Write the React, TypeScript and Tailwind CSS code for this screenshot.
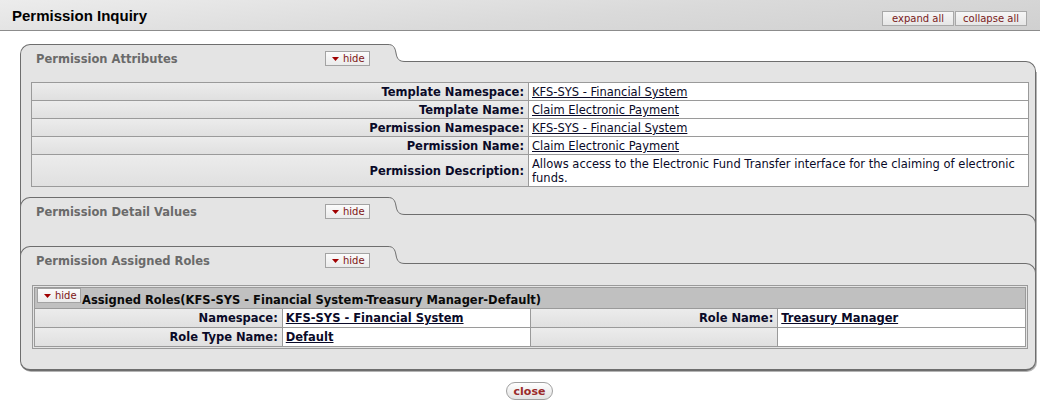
import React from "react";

const FONT = "font-['DejaVu_Sans',Verdana,sans-serif]";

function HideButton({ width = "w-[45px]" }: { width?: string }) {
  return (
    <span
      className={`inline-flex items-center h-[15px] ${width} shrink-0 border border-[#a3a3a3] bg-gradient-to-b from-[#fbfbfb] to-[#ebebeb] text-[10px] text-[#7d1414] leading-none ${FONT}`}
    >
      <svg width="7" height="4" viewBox="0 0 7 4" className="ml-[6px] mr-[4px] block">
        <path d="M0 0H7L3.5 4Z" fill="#a00000" />
      </svg>
      hide
    </span>
  );
}

function SectionHeader({ title, inside = false }: { title: string; inside?: boolean }) {
  return (
    <div className={`flex h-[27px] ${inside ? "-mx-px" : ""}`}>
      <div className="w-[368px] h-full bg-[#e4e4e4] border-t border-l border-[#6e6e6e] rounded-tl-[10px] pt-[6px]">
        <div className="flex items-center h-[15px]">
          <span className="pl-[15px] w-[304px] font-bold text-[11.5px] leading-[14px] text-[#6a6a6a] pt-px">
            {title}
          </span>
          <HideButton />
        </div>
      </div>
      <svg width="17" height="27" className="shrink-0 block">
        <path
          d="M0 0.5 C5 0.5 7 3 8 9 C9 15 11 17.5 17 17.5 L17 27 L0 27 Z"
          fill="#e4e4e4"
        />
        <path
          d="M0 0.5 C5 0.5 7 3 8 9 C9 15 11 17.5 17 17.5"
          fill="none"
          stroke="#6e6e6e"
        />
      </svg>
      <div className="flex-1 flex flex-col">
        <div className="h-[17px]" />
        <div className="h-[10px] bg-[#e4e4e4] border-t border-r border-[#6e6e6e] rounded-tr-[10px]" />
      </div>
    </div>
  );
}

const labelCell =
  "flex items-center justify-end pr-[4px] border-r border-b border-[#9a9a9a] bg-gradient-to-b from-[#ececec] to-[#e0e0e0] font-bold text-[#0a0a28]";
const valueCell =
  "flex items-center pl-[3px] border-r border-b border-[#9a9a9a] bg-white text-[#0a0a28]";

const attrs: [string, string][] = [
  ["Template Namespace:", "KFS-SYS - Financial System"],
  ["Template Name:", "Claim Electronic Payment"],
  ["Permission Namespace:", "KFS-SYS - Financial System"],
  ["Permission Name:", "Claim Electronic Payment"],
];

export default function App() {
  return (
    <div className={`w-[1040px] h-[410px] overflow-hidden bg-white ${FONT} text-[11.5px] leading-[14px]`}>
      {/* Title bar */}
      <div className="h-[31px] border-b border-[#8c8c8c] bg-[linear-gradient(175deg,#ececec_0%,#dadada_55%,#d0d0d0_100%)] flex justify-between pl-[12px] pr-[13px]">
        <h1 className="font-['Liberation_Sans',Arial,sans-serif] font-bold text-[15px] leading-[17px] text-black self-center">
          Permission Inquiry
        </h1>
        <div className="flex gap-[1px] mt-[11px] self-start">
          <span className="h-[15px] w-[72px] flex items-center justify-center border border-[#a8a8a8] bg-gradient-to-b from-[#f6f6f6] to-[#e6e6e6] text-[10px] leading-none text-[#7a1a1a]">
            expand all
          </span>
          <span className="h-[15px] w-[72px] flex items-center justify-center border border-[#a8a8a8] bg-gradient-to-b from-[#f6f6f6] to-[#e6e6e6] text-[10px] leading-none text-[#7a1a1a]">
            collapse all
          </span>
        </div>
      </div>

      {/* Panel */}
      <div className="ml-[20px] w-[1016px] mt-[13px]">
        <SectionHeader title="Permission Attributes" />
        <div className="bg-[#e4e4e4] border-l border-r border-b-2 border-[#6e6e6e] rounded-b-[10px] shadow-[1px_1px_0_#b4b4b4]">
          {/* Section 1 content */}
          <div className="pl-[10px] pr-[6px] pt-[11px] pb-[10px]">
            <div className="grid grid-cols-[497px_1fr] border-t border-l border-[#9a9a9a]">
              {attrs.map(([l, v], i) => (
                <React.Fragment key={i}>
                  <div className={`${labelCell} h-[18px] pt-px`}>{l}</div>
                  <div className={`${valueCell} h-[18px] pt-px`}>
                    <span className="underline">{v}</span>
                  </div>
                </React.Fragment>
              ))}
              <div className={`${labelCell} h-[32px]`}>Permission Description:</div>
              <div className={`${valueCell} h-[32px]`}>
                <span>
                  Allows access to the Electronic Fund Transfer interface for the claiming of electronic
                  <br />
                  funds.
                </span>
              </div>
            </div>
          </div>

          <SectionHeader inside title="Permission Detail Values" />
          <div className="h-[22px]" />

          <SectionHeader inside title="Permission Assigned Roles" />
          <div className="pl-[11px] pr-[7px] pt-[12px] pb-[20px]">
            <div className="border border-[#9a9a9a] p-px">
              <div className="grid grid-cols-4 border-t border-l border-[#9a9a9a]">
                <div className="col-span-4 h-[21px] bg-[#c0c0c0] border-r border-b border-[#9a9a9a] flex items-start pl-[2px]">
                  <HideButton width="w-[44px]" />
                  <span className="ml-[1px] pt-[5px] font-bold text-[#0a0a0a]">
                    Assigned Roles(KFS-SYS - Financial System-Treasury Manager-Default)
                  </span>
                </div>
                <div className={`${labelCell} h-[19px]`}>Namespace:</div>
                <div className={`${valueCell} h-[19px] font-bold`}>
                  <span className="underline">KFS-SYS - Financial System</span>
                </div>
                <div className={`${labelCell} h-[19px]`}>Role Name:</div>
                <div className={`${valueCell} h-[19px] font-bold`}>
                  <span className="underline">Treasury Manager</span>
                </div>
                <div className={`${labelCell} h-[19px]`}>Role Type Name:</div>
                <div className={`${valueCell} h-[19px] font-bold`}>
                  <span className="underline">Default</span>
                </div>
                <div className={`${labelCell} h-[19px]`}></div>
                <div className={`${valueCell} h-[19px]`}></div>
              </div>
            </div>
          </div>
        </div>

        {/* Close button */}
        <div className="flex justify-center mt-[11px] pl-[3px]">
          <span className="h-[18px] px-[7px] flex items-center rounded-full border border-[#a0a0a0] bg-gradient-to-b from-white to-[#e2e2e2] text-[11px] font-bold leading-none text-[#9a2a2a]">
            close
          </span>
        </div>
      </div>
    </div>
  );
}
